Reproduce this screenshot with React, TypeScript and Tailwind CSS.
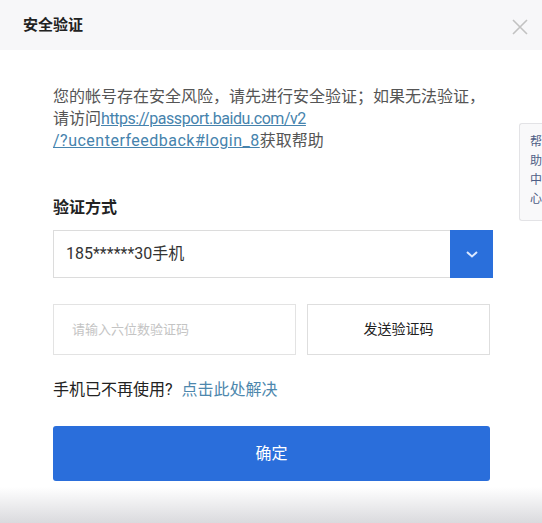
import { useState } from 'react';

function App() {
    const [code, setCode] = useState('');

    return (
        <div className="relative w-[542px] h-[523px] overflow-hidden bg-white font-['Roboto','Noto_Sans_CJK_SC',sans-serif]">

            {/* 标题栏 */}
            <div className="flex items-center justify-between h-[50px] bg-[#f7f7f9] pl-[23px] pr-[13px]">
                <div className="text-[15px] font-bold text-[#222]">安全验证</div>
                <svg width="18" height="18" viewBox="0 0 18 18" className="mt-[4px]">
                    <path d="M2 2 L16 16 M16 2 L2 16" stroke="#c2c2c2" strokeWidth="1.6" fill="none" />
                </svg>
            </div>

            {/* 内容 */}
            <div className="flex flex-col pl-[53px] pt-[36px]">
                <p className="text-[16px] leading-[22px] text-[#555]">
                    您的帐号存在安全风险，请先进行安全验证；如果无法验证，<br />
                    请访问<a className="text-[#4683ad] underline"><span className="tracking-[-0.45px]">https://passport.baidu.com/v2</span><br /><span className="tracking-[0.5px]">/?ucenterfeedback#login_8</span></a>获取帮助
                </p>

                <div className="mt-[45px] text-[16px] leading-[22px] font-semibold text-[#222]">验证方式</div>

                {/* 选择框 */}
                <div className="flex mt-[11px] w-[440px] h-[48px] border border-[#dcdcdc]">
                    <div className="flex-1 flex items-center pl-[12px] text-[16px] text-[#333]">185******30手机</div>
                    <div className="flex items-center justify-center w-[43px] -my-px -mr-px bg-[#2a6fdb]">
                        <svg width="14" height="10" viewBox="0 0 14 10">
                            <path d="M2 3 L7 7.5 L12 3" stroke="#dbe8ff" strokeWidth="2" fill="none" />
                        </svg>
                    </div>
                </div>

                {/* 验证码 */}
                <div className="flex gap-[11px] mt-[26px]">
                    <input
                        value={code}
                        onChange={(e) => setCode(e.target.value)}
                        placeholder="请输入六位数验证码"
                        className="w-[243px] h-[51px] border border-[#e3e3e3] pl-[18px] text-[13px] text-[#333] placeholder:text-[#c4c4c4] outline-none"
                    />
                    <button className="w-[183px] h-[51px] border border-[#dedede] bg-white text-[14px] text-[#222] cursor-pointer">
                        发送验证码
                    </button>
                </div>

                <div className="mt-[24px] text-[16px] leading-[22px] text-[#222]">
                    手机已不再使用? <span className="ml-[5px] text-[#4d87ad]">点击此处解决</span>
                </div>

                <button className="mt-[25px] w-[437px] h-[55px] rounded-[3px] bg-[#2a6edb] text-[16px] text-white cursor-pointer">
                    确定
                </button>
            </div>

            {/* 底部阴影 */}
            <div className="mt-[6px] h-[40px] bg-gradient-to-b from-white to-[#d6d6da]"></div>

            {/* 帮助中心 */}
            <div className="absolute right-0 top-[123px] w-[23px] h-[98px] flex flex-col pl-[10px] pt-[9px] border border-r-0 border-[#e3e3e6] rounded-l-[3px] bg-[#f9f9fa] text-[12px] leading-[19px] text-[#4f5f86]">
                <span>帮</span>
                <span>助</span>
                <span>中</span>
                <span>心</span>
            </div>
        </div>
    );
}

export default App;
